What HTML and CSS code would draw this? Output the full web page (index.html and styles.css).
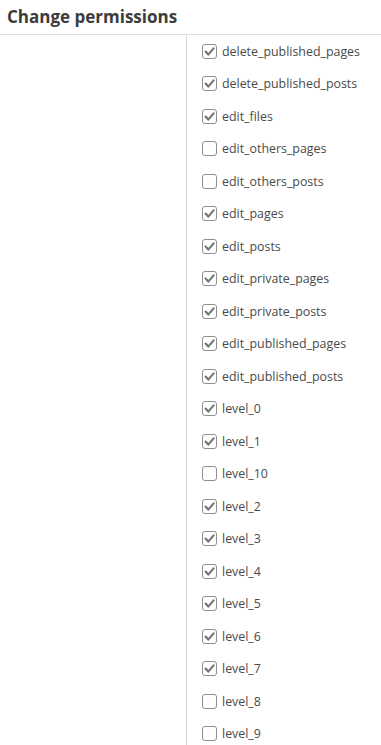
FILE: index.html
```html
<!DOCTYPE html>
<html lang="en">
<head>
<meta charset="UTF-8" />
<meta name="viewport" content="width=device-width, initial-scale=1.0"/>
<title>Change permissions</title>
<link rel="stylesheet" href="styles.css">
</head>
<body>

<h2 class="title">Change permissions</h2>

<div class="panel">
<div class="side"></div>
<ul class="caps">
<li><label><span class="box on"><svg viewBox="0 0 13 13"><path d="M2.6 6.6 L5.3 9.6 L10.6 3.4"/></svg></span>delete_published_pages</label></li>
<li><label><span class="box on"><svg viewBox="0 0 13 13"><path d="M2.6 6.6 L5.3 9.6 L10.6 3.4"/></svg></span>delete_published_posts</label></li>
<li><label><span class="box on"><svg viewBox="0 0 13 13"><path d="M2.6 6.6 L5.3 9.6 L10.6 3.4"/></svg></span>edit_files</label></li>
<li><label><span class="box"></span>edit_others_pages</label></li>
<li><label><span class="box"></span>edit_others_posts</label></li>
<li><label><span class="box on"><svg viewBox="0 0 13 13"><path d="M2.6 6.6 L5.3 9.6 L10.6 3.4"/></svg></span>edit_pages</label></li>
<li><label><span class="box on"><svg viewBox="0 0 13 13"><path d="M2.6 6.6 L5.3 9.6 L10.6 3.4"/></svg></span>edit_posts</label></li>
<li><label><span class="box on"><svg viewBox="0 0 13 13"><path d="M2.6 6.6 L5.3 9.6 L10.6 3.4"/></svg></span>edit_private_pages</label></li>
<li><label><span class="box on"><svg viewBox="0 0 13 13"><path d="M2.6 6.6 L5.3 9.6 L10.6 3.4"/></svg></span>edit_private_posts</label></li>
<li><label><span class="box on"><svg viewBox="0 0 13 13"><path d="M2.6 6.6 L5.3 9.6 L10.6 3.4"/></svg></span>edit_published_pages</label></li>
<li><label><span class="box on"><svg viewBox="0 0 13 13"><path d="M2.6 6.6 L5.3 9.6 L10.6 3.4"/></svg></span>edit_published_posts</label></li>
<li><label><span class="box on"><svg viewBox="0 0 13 13"><path d="M2.6 6.6 L5.3 9.6 L10.6 3.4"/></svg></span>level_0</label></li>
<li><label><span class="box on"><svg viewBox="0 0 13 13"><path d="M2.6 6.6 L5.3 9.6 L10.6 3.4"/></svg></span>level_1</label></li>
<li><label><span class="box"></span>level_10</label></li>
<li><label><span class="box on"><svg viewBox="0 0 13 13"><path d="M2.6 6.6 L5.3 9.6 L10.6 3.4"/></svg></span>level_2</label></li>
<li><label><span class="box on"><svg viewBox="0 0 13 13"><path d="M2.6 6.6 L5.3 9.6 L10.6 3.4"/></svg></span>level_3</label></li>
<li><label><span class="box on"><svg viewBox="0 0 13 13"><path d="M2.6 6.6 L5.3 9.6 L10.6 3.4"/></svg></span>level_4</label></li>
<li><label><span class="box on"><svg viewBox="0 0 13 13"><path d="M2.6 6.6 L5.3 9.6 L10.6 3.4"/></svg></span>level_5</label></li>
<li><label><span class="box on"><svg viewBox="0 0 13 13"><path d="M2.6 6.6 L5.3 9.6 L10.6 3.4"/></svg></span>level_6</label></li>
<li><label><span class="box on"><svg viewBox="0 0 13 13"><path d="M2.6 6.6 L5.3 9.6 L10.6 3.4"/></svg></span>level_7</label></li>
<li><label><span class="box"></span>level_8</label></li>
<li><label><span class="box"></span>level_9</label></li>
</ul>
</div>

</body>
</html>
```

FILE: styles.css
```css
* { box-sizing: border-box; }
html, body {
height: 100%;
}
body {
margin: 0;
background-color: #fff;
color: #444;
font-family: 'Open Sans', sans-serif;
overflow: hidden;
display: flex;
flex-direction: column;
}
.title {
margin: 0;
height: 35px;
flex: none;
padding: 0 7px;
font-size: 17px;
font-weight: 700;
line-height: 34px;
color: #3c3c3c;
border-bottom: 1px solid #dedede;
}
.panel {
display: flex;
flex: 1;
min-height: 0;
overflow: hidden;
}
.side {
width: 187px;
flex: none;
border-right: 1px solid #d6d6d6;
}
.caps {
list-style: none;
margin: 0;
padding: 0 0 0 15px;
}
.caps li {
height: 32.5px;
display: flex;
align-items: center;
}
.caps label {
display: flex;
align-items: center;
font-size: 12.4px;
color: #4a4a4a;
}
.box {
width: 15px;
height: 15px;
flex: none;
border: 1px solid #8f8f8f;
border-radius: 3px;
margin-right: 5px;
display: flex;
}
.box svg {
width: 13px;
height: 13px;
fill: none;
stroke: #767676;
stroke-width: 2.2;
stroke-linecap: round;
stroke-linejoin: round;
}
```
